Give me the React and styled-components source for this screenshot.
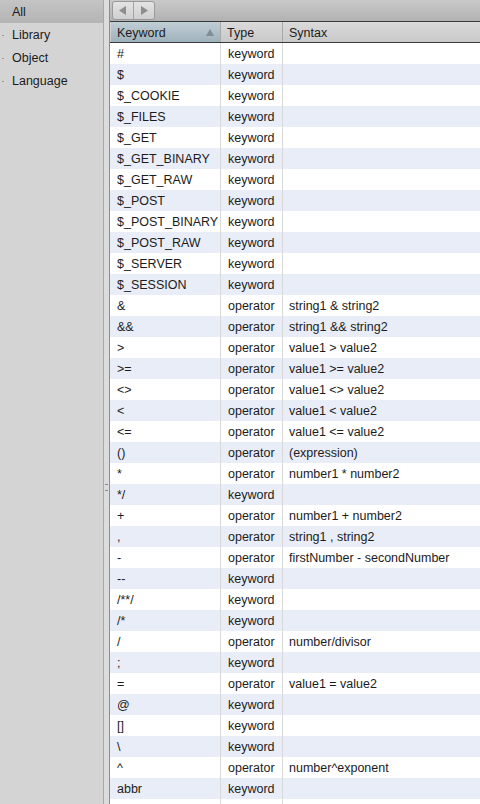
import React from "react";
import styled, { createGlobalStyle } from "styled-components";

const GlobalStyle = createGlobalStyle`
  html, body {
    margin: 0;
    padding: 0;
    height: 100%;
    overflow: hidden;
  }
  body {
    font-family: "Liberation Sans", Arial, sans-serif;
    font-size: 12.5px;
    color: #1a1a1a;
  }
  #root {
    height: 100%;
  }
`;

const rows = [
  ["#", "keyword", ""],
  ["$", "keyword", ""],
  ["$_COOKIE", "keyword", ""],
  ["$_FILES", "keyword", ""],
  ["$_GET", "keyword", ""],
  ["$_GET_BINARY", "keyword", ""],
  ["$_GET_RAW", "keyword", ""],
  ["$_POST", "keyword", ""],
  ["$_POST_BINARY", "keyword", ""],
  ["$_POST_RAW", "keyword", ""],
  ["$_SERVER", "keyword", ""],
  ["$_SESSION", "keyword", ""],
  ["&", "operator", "string1 & string2"],
  ["&&", "operator", "string1 && string2"],
  [">", "operator", "value1 > value2"],
  [">=", "operator", "value1 >= value2"],
  ["<>", "operator", "value1 <> value2"],
  ["<", "operator", "value1 < value2"],
  ["<=", "operator", "value1 <= value2"],
  ["()", "operator", "(expression)"],
  ["*", "operator", "number1 * number2"],
  ["*/", "keyword", ""],
  ["+", "operator", "number1 + number2"],
  [",", "operator", "string1 , string2"],
  ["-", "operator", "firstNumber - secondNumber"],
  ["--", "keyword", ""],
  ["/**/", "keyword", ""],
  ["/*", "keyword", ""],
  ["/", "operator", "number/divisor"],
  [";", "keyword", ""],
  ["=", "operator", "value1 = value2"],
  ["@", "keyword", ""],
  ["[]", "keyword", ""],
  ["\\", "keyword", ""],
  ["^", "operator", "number^exponent"],
  ["abbr", "keyword", ""],
  ["", "", ""],
];

const Window = styled.div`
  display: flex;
  height: 100%;
  background: #d4d4d4;
`;

const Sidebar = styled.div`
  width: 103px;
  flex-shrink: 0;
  background: #d4d4d4;
  border-right: 1px solid #a8a8a8;
  display: flex;
  flex-direction: column;
`;

const SideItem = styled.div`
  position: relative;
  height: 23px;
  line-height: 25px;
  padding-left: 12px;
  font-size: 12.5px;
  color: #1c1c1c;
  background: ${({ selected }) =>
    selected ? "linear-gradient(#c4c4c4, #b4b4b4)" : "transparent"};
`;

const Dot = styled.span`
  position: absolute;
  left: 2px;
  top: 12px;
  width: 2px;
  height: 1px;
  background: #9a9a9a;
`;

const Splitter = styled.div`
  width: 5px;
  flex-shrink: 0;
  background: #dcdcdc;
  border-right: 1px solid #8c8c8c;
  display: flex;
  align-items: center;
  justify-content: center;
`;

const Grip = styled.div`
  width: 3px;
  height: 5px;
  border-top: 1px solid #8a8a8a;
  border-bottom: 1px solid #8a8a8a;
  margin-top: 170px;
`;

const Main = styled.div`
  flex: 1;
  display: flex;
  flex-direction: column;
  min-width: 0;
  background: #fff;
`;

const Toolbar = styled.div`
  height: 22px;
  flex-shrink: 0;
  background: linear-gradient(#c9c9c9, #b9b9b9 70%, #b1b1b1);
  border-bottom: 1px solid #3a3a3a;
  display: flex;
  align-items: flex-start;
  padding: 1px 0 0 2px;
  box-sizing: border-box;
`;

const NavGroup = styled.div`
  display: flex;
  height: 17px;
  border: 1px solid #9a9a9a;
  border-radius: 3px;
  overflow: hidden;
  background: linear-gradient(#e4e4e4, #cfcfcf);
`;

const NavButton = styled.div`
  width: 20px;
  display: flex;
  align-items: center;
  justify-content: center;
  border-left: ${({ first }) => (first ? "none" : "1px solid #a4a4a4")};
`;

const Table = styled.div`
  flex: 1;
  display: flex;
  flex-direction: column;
  overflow: hidden;
`;

const cols = "110px 62px 1fr";

const HeaderRow = styled.div`
  display: grid;
  grid-template-columns: ${cols};
  height: 20px;
  flex-shrink: 0;
  background: linear-gradient(#dadada, #c9c9c9);
  border-bottom: 1px solid #3a3a3a;
  padding-left: 1px;
`;

const HeaderCell = styled.div`
  position: relative;
  display: flex;
  align-items: center;
  padding: 1px 0 0 6px;
  font-size: 12.5px;
  color: #1c1c1c;
  border-right: 1px solid #a9a9a9;
  background: ${({ sorted }) =>
    sorted ? "linear-gradient(#c0ced6, #9fb1bb)" : "transparent"};
  &:last-child {
    border-right: none;
  }
`;

const SortArrow = styled.span`
  position: absolute;
  right: 6px;
  top: 7px;
  width: 0;
  height: 0;
  border-left: 4px solid transparent;
  border-right: 4px solid transparent;
  border-bottom: 7px solid #7f8e96;
`;

const Row = styled.div`
  display: grid;
  grid-template-columns: ${cols};
  height: 21px;
  flex-shrink: 0;
  background: ${({ odd }) => (odd ? "#e8edf7" : "#ffffff")};
  padding-left: 1px;
`;

const Cell = styled.div`
  display: flex;
  align-items: center;
  padding-left: ${({ pad }) => pad || 6}px;
  font-size: 12.5px;
  color: #1c1c1c;
  white-space: nowrap;
  overflow: hidden;
  border-right: 1px solid #d9d9d9;
  &:last-child {
    border-right: none;
  }
`;

const Arrow = ({ dir }) => (
  <svg width="8" height="9" viewBox="0 0 8 9">
    {dir === "left" ? (
      <polygon points="7,0 7,9 0,4.5" fill="#8d8d8d" />
    ) : (
      <polygon points="1,0 1,9 8,4.5" fill="#8d8d8d" />
    )}
  </svg>
);

const App = () => {
  return (
    <>
      <GlobalStyle />
      <Window>
        <Sidebar>
          <SideItem selected>All</SideItem>
          <SideItem>
            <Dot />
            Library
          </SideItem>
          <SideItem>
            <Dot />
            Object
          </SideItem>
          <SideItem>
            <Dot />
            Language
          </SideItem>
        </Sidebar>
        <Splitter>
          <Grip />
        </Splitter>
        <Main>
          <Toolbar>
            <NavGroup>
              <NavButton first>
                <Arrow dir="left" />
              </NavButton>
              <NavButton>
                <Arrow dir="right" />
              </NavButton>
            </NavGroup>
          </Toolbar>
          <Table>
            <HeaderRow>
              <HeaderCell sorted>
                Keyword
                <SortArrow />
              </HeaderCell>
              <HeaderCell>Type</HeaderCell>
              <HeaderCell>Syntax</HeaderCell>
            </HeaderRow>
            {rows.map(([k, t, s], i) => (
              <Row key={i} odd={i % 2 === 1}>
                <Cell>{k}</Cell>
                <Cell pad={7}>{t}</Cell>
                <Cell>{s}</Cell>
              </Row>
            ))}
          </Table>
        </Main>
      </Window>
    </>
  );
};

export default App;
